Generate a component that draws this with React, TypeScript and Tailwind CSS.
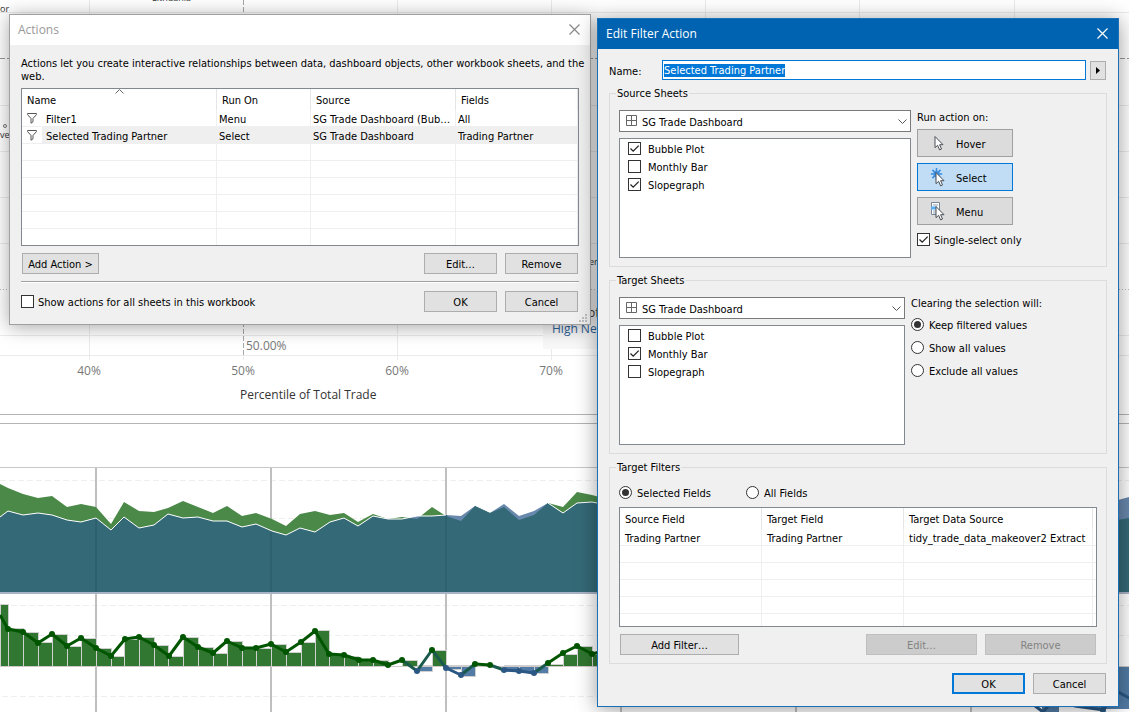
import { useEffect, useRef, type ReactNode } from "react";

const UI_FONT = "font-['DejaVu_Sans_Condensed','Noto_Sans',sans-serif]";
const TITLE_FONT = "font-['Open_Sans','Noto_Sans',sans-serif]";

type Point = [number, number];

/* Chart data: one entry per month, in plot pixels */
const EXPORTS: Point[] = [
  [0, 17], [8, 21], [23, 27], [38, 31], [52, 29], [67, 40], [81, 37], [96, 40], [111, 57], [124, 35],
  [139, 44], [154, 45], [168, 41], [183, 34], [198, 40], [213, 46], [227, 39], [242, 49], [256, 46],
  [272, 52], [286, 59], [300, 47], [315, 44], [330, 48], [344, 46], [358, 55], [373, 47], [388, 52],
  [402, 50], [417, 52], [432, 40], [446, 49], [461, 54], [475, 39], [490, 46], [504, 40], [519, 53],
  [534, 48], [548, 36], [563, 40], [577, 25], [592, 28], [607, 32],
];
const IMPORTS: Point[] = [
  [0, 50], [8, 44], [23, 48], [38, 46], [52, 48], [67, 53], [81, 55], [96, 51], [111, 63], [124, 50],
  [139, 61], [154, 58], [168, 47], [183, 51], [198, 50], [213, 54], [227, 54], [242, 60], [256, 57],
  [272, 64], [286, 68], [300, 61], [315, 65], [330, 55], [344, 51], [358, 59], [373, 49], [388, 52],
  [402, 52], [417, 49], [432, 49], [446, 48], [461, 49], [475, 39], [490, 46], [504, 37], [519, 49],
  [534, 44], [548, 36], [563, 46], [577, 36], [592, 35], [607, 38],
];
const BALANCE: Point[] = [
  [8, 36], [23, 39], [38, 50], [52, 41], [67, 53], [81, 45], [96, 55], [111, 63], [125, 46], [139, 44],
  [154, 52], [169, 63], [183, 44], [198, 54], [213, 60], [227, 48], [242, 55], [256, 55], [271, 51],
  [286, 59], [301, 49], [315, 38], [329, 61], [344, 62], [359, 67], [373, 67], [388, 72], [402, 67],
  [417, 78], [432, 57], [446, 75], [461, 82], [475, 71], [490, 72], [504, 77], [519, 78], [534, 80],
  [548, 70], [563, 60], [577, 53], [592, 61], [607, 57],
];
const BARS: [number, number, number][] = [
  [0, 8, 11], [8, 23, 35], [23, 38, 39], [38, 52, 49], [52, 67, 41], [67, 81, 53], [81, 96, 45],
  [96, 111, 55], [111, 124, 63], [124, 139, 46], [139, 154, 44], [154, 168, 52], [168, 183, 63],
  [183, 198, 44], [198, 213, 54], [213, 227, 60], [227, 242, 48], [242, 256, 54], [256, 271, 55],
  [271, 286, 51], [286, 301, 59], [301, 315, 49], [315, 329, 37], [329, 344, 61], [344, 358, 63],
  [358, 373, 66], [373, 388, 67], [402, 417, 67], [417, 432, 77], [432, 446, 57], [446, 461, 75],
  [461, 475, 82], [504, 519, 77], [519, 534, 78], [534, 548, 79], [548, 563, 71], [563, 577, 61],
  [577, 592, 53], [592, 607, 61],
];
const BASELINE = 72;
const GREEN = "#005500";
const BLUE = "#2a5783";

const YEARS = [96, 271, 446, 621, 796, 971];
const toPoints = (p: Point[]) => p.map((q) => q.join(",")).join(" ");
const toArea = (p: Point[], base: number) => `${toPoints(p)} ${p[p.length - 1][0]},${base} 0,${base}`;

function ScatterAxis() {
  return (
    <svg className="block h-[414px] w-full font-['Open_Sans','Noto_Sans',sans-serif] text-xs" shapeRendering="crispEdges">
      {[89, 397, 551, 705, 859, 1014].map((x) => (
        <rect key={x} x={x} y="0" width="1" height="360" fill="#ebebeb" />
      ))}
      {[12, 105, 151, 197, 243, 335, 355].map((y) => (
        <rect key={y} x="0" y={y} width="100%" height="1" fill="#ebebeb" />
      ))}
      <line x1="0" x2="100%" y1="58.5" y2="58.5" stroke="#999" strokeDasharray="5 2" />
      <line x1="0" x2="100%" y1="289.5" y2="289.5" stroke="#bbb" strokeDasharray="1 2" />
      <line x1="243.5" x2="243.5" y1="0" y2="355" stroke="#a6a6a6" strokeDasharray="5 2" />
      <rect x="243" y="355" width="1" height="5" fill="#ebebeb" />
      <rect x="543" y="290" width="80" height="59" fill="#f8f8f8" />
      <circle cx="5" cy="126" r="1.5" fill="none" stroke="#777" shapeRendering="auto" />
      <g fill="#333" fontSize="9">
        <text x="0" y="12">or</text>
        <text x="152" y="1">Lithuania</text>
        <text x="0" y="138">ve</text>
        <text x="589" y="265">ent</text>
      </g>
      <text x="588" y="317" fill="#333">of</text>
      <text x="552" y="333" fill="#2e6298">High Net</text>
      <g fill="#787878">
        <text x="246" y="350">50.00%</text>
        <g textAnchor="middle">
          <text x="89" y="375">40%</text>
          <text x="243" y="375">50%</text>
          <text x="397" y="375">60%</text>
          <text x="551" y="375">70%</text>
        </g>
      </g>
      <text x="240" y="399" fill="#333">Percentile of Total Trade</text>
    </svg>
  );
}

function TradeArea() {
  return (
    <svg className="block h-[126px] w-full">
      <defs>
        <clipPath id="exports-clip">
          <polygon points={toArea(EXPORTS, 125)} />
        </clipPath>
        <clipPath id="imports-clip">
          <polygon points={toArea(IMPORTS, 125)} />
        </clipPath>
      </defs>
      <line x1="0" x2="100%" y1="12.5" y2="12.5" stroke="#eee" strokeDasharray="6 3" />
      <line x1="0" x2="100%" y1="50.5" y2="50.5" stroke="#eee" strokeDasharray="6 3" />
      {YEARS.map((x) => (
        <rect key={x} x={x - 1} y="0" width="2" height="126" fill="#bfbfbf" />
      ))}
      <g transform="translate(0 -1)">
        <polygon points={toArea(EXPORTS, 125)} fill="#4b8949" />
        <polygon points={toArea(IMPORTS, 125)} fill="#6888ad" />
        <polygon points={toArea(IMPORTS, 125)} fill="#346a77" clipPath="url(#exports-clip)" />
        <g clipPath="url(#imports-clip)">
          {YEARS.slice(0, 3).map((x) => (
            <rect key={x} x={x - 1} y="0" width="2" height="125" fill="#2e616f" />
          ))}
        </g>
        <polyline points={toPoints(IMPORTS.slice(0, 32))} fill="none" stroke="#fff" strokeWidth="1" />
        <polyline points={toPoints(IMPORTS.slice(38))} fill="none" stroke="#fff" strokeWidth="1" />
      </g>
      <polygon points="1100,37 1129,29 1150,27 1150,125 1100,125" fill="#6888ad" />
      <polygon points="1100,55 1129,50 1150,48 1150,125 1100,125" fill="#346a77" />
      <rect x="0" y="124" width="100%" height="2" fill="#a9b3c6" />
    </svg>
  );
}

function BalanceBars() {
  return (
    <svg className="block h-[118px] w-full">
      {[11, 41, 102].map((y) => (
        <line key={y} x1="2" x2="100%" y1={y + 0.5} y2={y + 0.5} stroke="#eee" strokeDasharray="6 3" />
      ))}
      {YEARS.map((x) => (
        <rect key={x} x={x - 1} y="0" width="2" height="119" fill="#bfbfbf" />
      ))}
      {BARS.map(([x0, x1, v]) => (
        <rect
          key={x0}
          x={x0 + 0.5}
          y={Math.min(v, BASELINE) - 0.5}
          width={x1 - x0}
          height={Math.abs(BASELINE - v) + 1}
          fill={v <= BASELINE ? "#317631" : "#527ba5"}
          stroke="#d0d0d0"
        />
      ))}
      <rect x="1042" y="112" width="17" height="7" fill="#527ba5" />
      <rect x="1088" y="73" width="62" height="42" fill="#527ba5" />
      <rect x="0" y={BASELINE} width="100%" height="1" fill="#cfc9c9" />
      <g transform="translate(0 -1)">
        <polyline points="0,22 8,36" stroke={GREEN} strokeWidth="3" fill="none" />
        {BALANCE.slice(1).map(([x, y], i) => {
          const [px, py] = BALANCE[i];
          const low = y > 74 || py > 74;
          const mixed = (y > 74) !== (py > 74);
          return (
            <line key={x} x1={px} y1={py} x2={x} y2={y} stroke={mixed ? "#1a5a4c" : low ? BLUE : GREEN} strokeWidth="3" />
          );
        })}
        {BALANCE.map(([x, y]) => (
          <circle key={x} cx={x} cy={y} r="3" fill={y > 74 ? BLUE : GREEN} />
        ))}
      </g>
      <polyline points="1030,108 1043,118 1055,104 1075,112 1103,116 1118,98 1135,107" stroke={BLUE} strokeWidth="3" fill="none" />
      <circle cx="1103" cy="116" r="3" fill={BLUE} />
    </svg>
  );
}

function CloseIcon({ color }: { color: string }) {
  return (
    <svg width="11" height="11" viewBox="0 0 11 11" stroke={color} fill="none">
      <path d="M.5.5l10 10M10.5.5l-10 10" strokeWidth="1.2" />
    </svg>
  );
}

function PushButton({ children, className = "", tone = "normal" }: { children: ReactNode; className?: string; tone?: "normal" | "primary" | "disabled" }) {
  const tones = {
    normal: "border border-[#adadad] bg-[#e1e1e1] pt-[2px]",
    primary: "border-2 border-[#0078d7] bg-[#e1e1e1] pt-[2px]",
    disabled: "border border-[#bfbfbf] bg-[#ccc] pt-[2px] text-[#838383]",
  };
  return (
    <button type="button" disabled={tone === "disabled"} className={`flex h-[21px] items-center justify-center ${tones[tone]} ${className}`}>
      {children}
    </button>
  );
}

function CheckItem({ label, checked = false, gap = "gap-1" }: { label: string; checked?: boolean; gap?: string }) {
  return (
    <label className={`flex h-[13px] items-center ${gap}`}>
      <span className="grid size-[13px] shrink-0 *:col-start-1 *:row-start-1">
        <input type="checkbox" defaultChecked={checked} className="peer size-[13px] appearance-none border border-[#333] bg-white" />
        <svg className="pointer-events-none hidden size-[13px] peer-checked:block" viewBox="0 0 13 13" fill="none" stroke="#222" strokeWidth="1.3">
          <path d="M2.5 6.5l2.7 2.7 5.5-5.6" />
        </svg>
      </span>
      <span className="pt-[2px]">{label}</span>
    </label>
  );
}

function RadioItem({ label, name, checked = false }: { label: string; name: string; checked?: boolean }) {
  return (
    <label className="flex h-[13px] items-center gap-[5px]">
      <span className="grid size-[13px] shrink-0 *:col-start-1 *:row-start-1">
        <input type="radio" name={name} defaultChecked={checked} className="peer size-[13px] appearance-none rounded-full border border-[#333] bg-white" />
        <svg className="pointer-events-none hidden size-[13px] peer-checked:block" viewBox="0 0 13 13">
          <circle cx="6.5" cy="6.5" r="3.5" fill="#333" />
        </svg>
      </span>
      <span className="pt-px">{label}</span>
    </label>
  );
}

function Group({ title, children }: { title: string; children: ReactNode }) {
  return (
    <fieldset className="mt-[7px] min-w-0 border border-[#dcdcdc]">
      <legend className="ml-[6px] px-px">{title}</legend>
      <div className="px-[9px] pb-2">{children}</div>
    </fieldset>
  );
}

function SheetPicker({ label, checked, className }: { label: string; checked: string[]; className: string }) {
  return (
    <div className={className}>
      <div className="relative">
        <select aria-label={label} className="block h-[22px] w-full appearance-none border border-[#7a7a7a] bg-white pt-[2px] pl-[22px]">
          <option>SG Trade Dashboard</option>
        </select>
        <svg className="pointer-events-none absolute top-[5px] left-[7px]" width="11" height="11" fill="none" stroke="#666">
          <path d="M.5.5h10v10H.5zM5.5.5v10M.5 5.5h10" />
        </svg>
        <svg className="pointer-events-none absolute top-[9px] right-1" width="9" height="6" fill="none" stroke="#555">
          <path d="M.5.5l4 4 4-4" />
        </svg>
      </div>
      <div className="mt-[6px] flex h-[120px] flex-col gap-[5px] border border-[#828790] bg-white pt-[3px] pl-2">
        {["Bubble Plot", "Monthly Bar", "Slopegraph"].map((s) => (
          <CheckItem key={s} label={s} checked={checked.includes(s)} gap="gap-[7px]" />
        ))}
      </div>
    </div>
  );
}

const POINTER = "M5 2.5v11.2l2.6-2.4 2 4.6 1.9-.9-1.9-4.3h3.4z";

function PointerIcon({ kind }: { kind: "Hover" | "Select" | "Menu" }) {
  const shift = kind === "Hover" ? undefined : "translate(1 2)";
  return (
    <svg width="18" height="19" viewBox="0 0 18 19">
      {kind === "Select" && (
        <g stroke="#3d8ee0" strokeWidth="1.6">
          <circle cx="6.5" cy="6" r="3.2" fill="#4c9be8" stroke="none" />
          <path d="M6.5 0v12M.8 6h11.4M2.4 1.9l8.2 8.2M10.6 1.9L2.4 10.1" />
        </g>
      )}
      {kind === "Menu" && (
        <g>
          <path d="M1.5.5h8v12h-8z" fill="#fff" stroke="#778899" />
          <path d="M3 3h5M3 9h5M3 11h5" stroke="#8fa0b0" />
          <path d="M1 4.5h6v3H1z" fill="#5aaef5" />
        </g>
      )}
      <path d={POINTER} fill="#fff" stroke="#4a4f55" transform={shift} />
    </svg>
  );
}

function FilterIcon() {
  return (
    <svg width="10" height="11" viewBox="0 0 10 11" fill="none" stroke="#555">
      <path d="M.6.5h8.8v1.2L6 5.4v3.4L4 10.2V5.4L.6 1.7z" />
    </svg>
  );
}

const ACTION_ROWS = [
  ["Filter1", "Menu", "SG Trade Dashboard (Bub…", "All"],
  ["Selected Trading Partner", "Select", "SG Trade Dashboard", "Trading Partner"],
];

function ActionsDialog() {
  const head = "border-r border-[#e5e5e5] pt-[2px] pl-[5px] text-left font-normal";
  const cell = "border-r border-b border-[#efefef] pt-[2px] whitespace-nowrap";
  return (
    <section role="dialog" aria-label="Actions" className="absolute top-[14px] left-[9px] w-[582px] border border-[#a0a0a0] bg-[#f0f0f0] shadow-[0_2px_18px_rgba(0,0,0,0.35)]">
      <header className={`flex h-[30px] items-center justify-between bg-white pr-[10px] pb-px pl-2 text-xs text-[#999] ${TITLE_FONT}`}>
        <h2>Actions</h2>
        <button type="button" aria-label="Close"><CloseIcon color="#888" /></button>
      </header>
      <p className="pt-3 pl-[11px]">
        Actions let you create interactive relationships between data, dashboard objects, other workbook sheets, and the web.
      </p>
      <div className="px-[11px] pb-3">
        <div className="relative mt-[5px] h-[158px] overflow-hidden border border-[#828790] bg-white">
          <table className="w-full table-fixed border-separate border-spacing-0">
            <colgroup>
              <col className="w-[20px]" />
              <col className="w-[175px]" />
              <col className="w-[94px]" />
              <col className="w-[145px]" />
              <col />
            </colgroup>
            <thead>
              <tr className="h-[21px]">
                <th colSpan={2} className={head}>Name</th>
                <th className={head}>Run On</th>
                <th className={head}>Source</th>
                <th className={head}>Fields</th>
              </tr>
            </thead>
            <tbody>
              {ACTION_ROWS.map((row, i) => (
                <tr key={row[0]} className="h-[17px]">
                  <td className="border-b border-[#efefef] pl-[5px]"><FilterIcon /></td>
                  {row.map((c, j) => (
                    <td key={j} className={`${cell} ${j === 0 ? "pl-[4px]" : "pl-[2px]"} ${i === 1 ? "bg-[#efefef]" : ""}`}>{c}</td>
                  ))}
                </tr>
              ))}
              {[0, 1, 2, 3, 4, 5].map((r) => (
                <tr key={r} className="h-[17px]">
                  <td className="border-b border-[#efefef]" />
                  <td className={cell} /><td className={cell} /><td className={cell} /><td className={cell} />
                </tr>
              ))}
            </tbody>
          </table>
          <svg className="absolute top-0 left-[93px]" width="9" height="5" fill="none" stroke="#666">
            <path d="M.5 4.5l4-4 4 4" />
          </svg>
        </div>
        <div className="mt-[7px] flex gap-2 px-px">
          <PushButton className="w-[77px]">Add Action &gt;</PushButton>
          <div className="flex-1" />
          <PushButton className="w-[73px]">Edit…</PushButton>
          <PushButton className="w-[73px]">Remove</PushButton>
        </div>
        <hr className="mt-[7px] h-[2px] border-t border-b border-t-[#a0a0a0] border-b-white" />
        <div className="mt-2 flex items-center gap-2 pr-px">
          <CheckItem label="Show actions for all sheets in this workbook" />
          <div className="flex-1" />
          <PushButton className="w-[73px]">OK</PushButton>
          <PushButton className="w-[73px]">Cancel</PushButton>
        </div>
      </div>
      <svg className="absolute right-[3px] bottom-[2px]" width="8" height="8" fill="#bfbfbf">
        <path d="M6 0h2v2H6zM3 3h2v2H3zM6 3h2v2H6zM0 6h2v2H0zM3 6h2v2H3zM6 6h2v2H6z" />
      </svg>
    </section>
  );
}

function EditFilterDialog() {
  const nameRef = useRef<HTMLInputElement>(null);
  useEffect(() => {
    nameRef.current?.focus();
    nameRef.current?.select();
  }, []);
  const head = "border-r border-[#e5e5e5] pt-[2px] pl-[5px] text-left font-normal";
  const cell = "border-r border-b border-[#efefef] pt-[2px] pl-[5px] whitespace-nowrap";
  return (
    <section role="dialog" aria-label="Edit Filter Action" className="absolute top-[18px] left-[597px] w-[522px] border border-[#1a6fb5] bg-[#f0f0f0] shadow-[0_2px_20px_rgba(0,0,0,0.4)]">
      <header className={`flex h-[30px] items-center justify-between bg-[#0063b1] pr-[10px] pb-px pl-2 text-xs text-white ${TITLE_FONT}`}>
        <h2>Edit Filter Action</h2>
        <button type="button" aria-label="Close"><CloseIcon color="#fff" /></button>
      </header>
      <div className="px-[11px] pt-[11px] pb-3">
        <div className="flex items-center gap-1 pr-px">
          <label htmlFor="action-name" className="w-[49px] pt-[2px]">Name:</label>
          <input
            id="action-name"
            ref={nameRef}
            defaultValue="Selected Trading Partner"
            className="h-5 min-w-0 flex-1 border border-[#0078d7] bg-white px-px pt-px outline-none selection:bg-[#0078d7] selection:text-white"
          />
          <button type="button" aria-label="Insert" className="flex h-[19px] w-4 items-center justify-center border border-[#adadad] bg-[#e1e1e1]">
            <svg width="4" height="7"><path d="M0 0l4 3.5L0 7z" /></svg>
          </button>
        </div>

        <Group title="Source Sheets">
          <div className="flex gap-[6px] pt-[10px]">
            <SheetPicker label="Source sheet" checked={["Bubble Plot", "Slopegraph"]} className="w-[292px]" />
            <div className="pt-px">
              <p>Run action on:</p>
              <div className="mt-[5px] flex flex-col gap-[6px]">
                {(["Hover", "Select", "Menu"] as const).map((k) => (
                  <button
                    key={k}
                    type="button"
                    className={`flex h-7 w-24 items-center gap-2 border pl-3 ${k === "Select" ? "border-[#0078d7] bg-[#c0ddf5]" : "border-[#a0a0a0] bg-[#dcdcdc]"}`}
                  >
                    <PointerIcon kind={k} />
                    <span className="pt-[2px]">{k}</span>
                  </button>
                ))}
              </div>
              <div className="mt-2"><CheckItem label="Single-select only" checked /></div>
            </div>
          </div>
        </Group>

        <Group title="Target Sheets">
          <div className="flex gap-[6px] pt-[10px]">
            <SheetPicker label="Target sheet" checked={["Monthly Bar"]} className="w-[286px]" />
            <div>
              <p>Clearing the selection will:</p>
              <div className="mt-2 flex flex-col gap-[10px]">
                <RadioItem name="clearing" label="Keep filtered values" checked />
                <RadioItem name="clearing" label="Show all values" />
                <RadioItem name="clearing" label="Exclude all values" />
              </div>
            </div>
          </div>
        </Group>

        <Group title="Target Filters">
          <div className="flex pt-3">
            <div className="w-[127px]"><RadioItem name="fields" label="Selected Fields" checked /></div>
            <RadioItem name="fields" label="All Fields" />
          </div>
          <div className="mt-2 h-[120px] overflow-hidden border border-[#828790] bg-white">
            <table className="w-full table-fixed border-separate border-spacing-0">
              <colgroup>
                <col className="w-[142px]" />
                <col className="w-[142px]" />
                <col />
                <col className="w-[3px]" />
              </colgroup>
              <thead>
                <tr className="h-[21px]">
                  <th className={head}>Source Field</th>
                  <th className={head}>Target Field</th>
                  <th className={head}>Target Data Source</th>
                  <td />
                </tr>
              </thead>
              <tbody>
                <tr className="h-[17px]">
                  <td className={cell}>Trading Partner</td>
                  <td className={cell}>Trading Partner</td>
                  <td className={cell}>tidy_trade_data_makeover2 Extract</td>
                  <td className="border-b border-[#efefef]" />
                </tr>
                {[0, 1, 2, 3, 4].map((r) => (
                  <tr key={r} className="h-[17px]">
                    <td className={cell} /><td className={cell} /><td className={cell} />
                    <td className="border-b border-[#efefef]" />
                  </tr>
                ))}
              </tbody>
            </table>
          </div>
          <div className="mt-[7px] flex gap-2 px-px">
            <PushButton className="w-[119px]">Add Filter…</PushButton>
            <div className="flex-1" />
            <PushButton className="w-[111px]" tone="disabled">Edit…</PushButton>
            <PushButton className="w-[111px]" tone="disabled">Remove</PushButton>
          </div>
        </Group>

        <div className="mt-[9px] flex justify-end gap-2 pr-px">
          <PushButton className="w-[73px]" tone="primary">OK</PushButton>
          <PushButton className="w-[73px]">Cancel</PushButton>
        </div>
      </div>
    </section>
  );
}

export default function App() {
  return (
    <div className={`relative min-h-screen w-full overflow-hidden bg-white text-[11px] leading-[13px] text-black ${UI_FONT}`}>
      <main>
        <ScatterAxis />
        <div className="h-[10px] border-y border-[#b4b4b4]" />
        <div className="h-[44px] border-b border-[#c8c8c8]" />
        <TradeArea />
        <BalanceBars />
      </main>
      <ActionsDialog />
      <EditFilterDialog />
    </div>
  );
}
